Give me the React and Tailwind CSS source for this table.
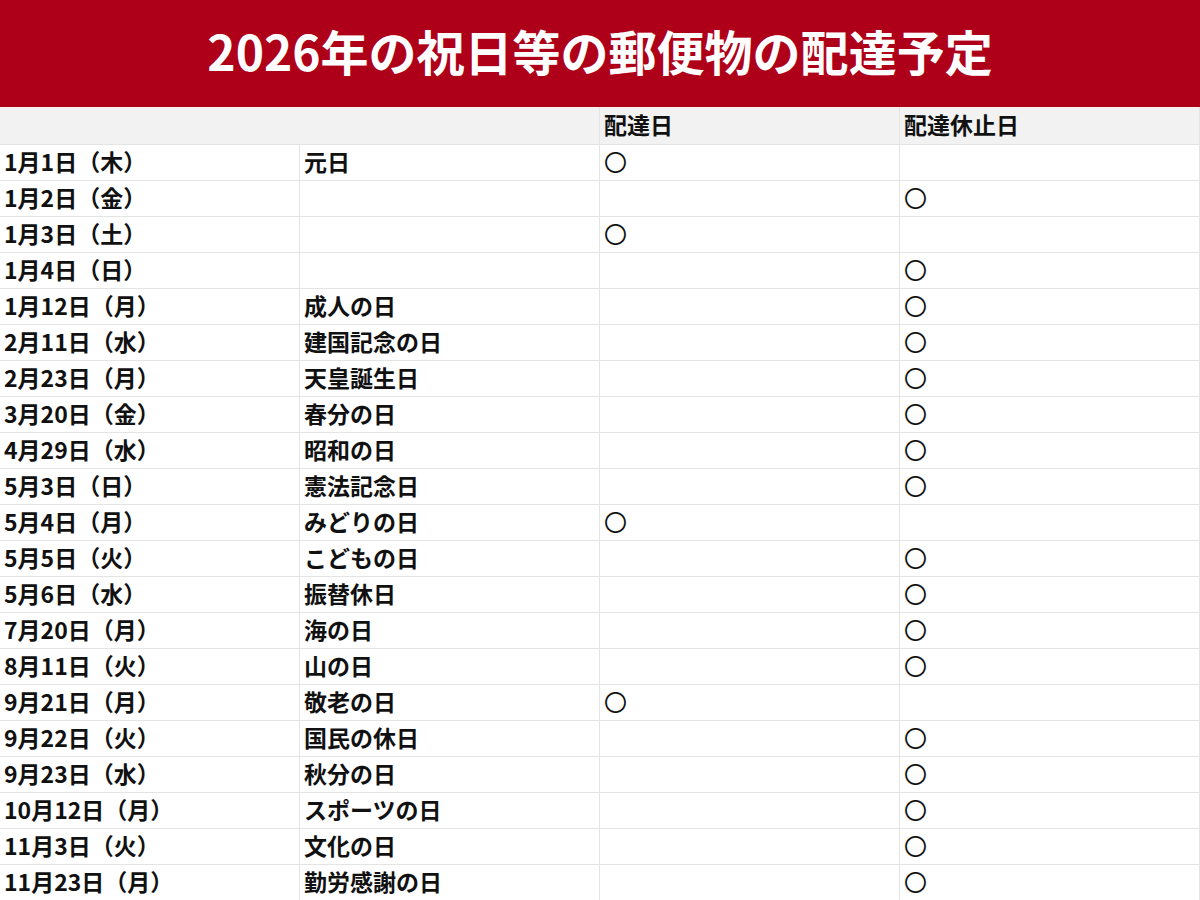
const ROWS = [
  ['1月1日（木）', '元日', true, false],
  ['1月2日（金）', '', false, true],
  ['1月3日（土）', '', true, false],
  ['1月4日（日）', '', false, true],
  ['1月12日（月）', '成人の日', false, true],
  ['2月11日（水）', '建国記念の日', false, true],
  ['2月23日（月）', '天皇誕生日', false, true],
  ['3月20日（金）', '春分の日', false, true],
  ['4月29日（水）', '昭和の日', false, true],
  ['5月3日（日）', '憲法記念日', false, true],
  ['5月4日（月）', 'みどりの日', true, false],
  ['5月5日（火）', 'こどもの日', false, true],
  ['5月6日（水）', '振替休日', false, true],
  ['7月20日（月）', '海の日', false, true],
  ['8月11日（火）', '山の日', false, true],
  ['9月21日（月）', '敬老の日', true, false],
  ['9月22日（火）', '国民の休日', false, true],
  ['9月23日（水）', '秋分の日', false, true],
  ['10月12日（月）', 'スポーツの日', false, true],
  ['11月3日（火）', '文化の日', false, true],
  ['11月23日（月）', '勤労感謝の日', false, true],
]

const cell = 'flex items-center pl-[4px] pb-[3px] leading-none border-r border-[#e4e4e4] overflow-hidden whitespace-nowrap'

export default function App() {
  return (
    <div className="w-[1200px] h-[900px] overflow-hidden bg-white text-[#111] font-['Noto_Sans_CJK_JP','Noto_Sans',sans-serif]">
      <div className="h-[107px] bg-[#af0019] flex items-center justify-center pb-[8px]">
        <h1 className="text-white text-[48px] font-bold leading-none">2026年の祝日等の郵便物の配達予定</h1>
      </div>

      <div className="grid grid-cols-4 h-[37px] bg-[#f2f2f2] text-[23px] font-bold">
        <div className={`${cell} col-span-2`}></div>
        <div className={cell}>配達日</div>
        <div className={cell}>配達休止日</div>
      </div>

      {ROWS.map(([date, name, deliver, stop]) => (
        <div key={date} className="grid grid-cols-4 h-[36px] border-t border-[#e4e4e4] text-[23px] font-bold">
          <div className={cell}>{date}</div>
          <div className={cell}>{name}</div>
          <div className={`${cell} font-normal`}>{deliver ? '〇' : ''}</div>
          <div className={`${cell} font-normal`}>{stop ? '〇' : ''}</div>
        </div>
      ))}
    </div>
  )
}
